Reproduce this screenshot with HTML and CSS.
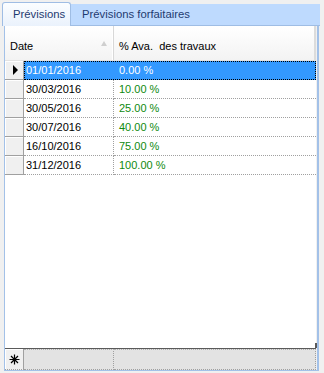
FILE: index.html
```html
<!DOCTYPE html>
<html lang="fr">
<head>
    <meta charset="UTF-8">
    <title>Prévisions</title>
    <link rel="stylesheet" href="styles.css">
</head>
<body>
    <div class="tabs">
        <div class="tab active">Prévisions</div>
        <div class="tab rest">Prévisions forfaitaires</div>
    </div>

    <div class="panel">
        <div class="grid">
            <div class="head">
                <div class="hc c1">Date<span class="sort"></span></div>
                <div class="hc c2">% Ava.&nbsp; des travaux</div>
            </div>

            <div class="row selected">
                <div class="rh"><span class="arrow"></span></div>
                <div class="cells">
                    <div class="c c1">01/01/2016</div>
                    <div class="c c2">0.00 %</div>
                </div>
            </div>
            <div class="row">
                <div class="rh"></div>
                <div class="cells">
                    <div class="c c1">30/03/2016</div>
                    <div class="c c2 pct">10.00 %</div>
                </div>
            </div>
            <div class="row">
                <div class="rh"></div>
                <div class="cells">
                    <div class="c c1">30/05/2016</div>
                    <div class="c c2 pct">25.00 %</div>
                </div>
            </div>
            <div class="row">
                <div class="rh"></div>
                <div class="cells">
                    <div class="c c1">30/07/2016</div>
                    <div class="c c2 pct">40.00 %</div>
                </div>
            </div>
            <div class="row">
                <div class="rh"></div>
                <div class="cells">
                    <div class="c c1">16/10/2016</div>
                    <div class="c c2 pct">75.00 %</div>
                </div>
            </div>
            <div class="row">
                <div class="rh"></div>
                <div class="cells">
                    <div class="c c1">31/12/2016</div>
                    <div class="c c2 pct">100.00 %</div>
                </div>
            </div>

            <div class="filler"></div>

            <div class="row newrow">
                <div class="rh">
                    <svg width="11" height="11" viewBox="0 0 11 11">
                        <path d="M5.5 0.5v10M0.5 5.5h10M2 2l7 7M9 2l-7 7" stroke="#000" stroke-width="1.2" fill="none"/>
                    </svg>
                </div>
                <div class="cells">
                    <div class="c c1"></div>
                    <div class="c c2"></div>
                </div>
            </div>
        </div>
    </div>
</body>
</html>
```

FILE: styles.css
```css
body {
    margin: 0;
    background-color: #f0f0f0;
    font-family: "Liberation Sans", Arial, sans-serif;
    font-size: 11px;
    color: #000;
}

.tabs {
    display: flex;
    align-items: flex-end;
    height: 24px;
    padding: 2px 4px 0 2px;
}
.tab {
    height: 22px;
    line-height: 20px;
    font-size: 11.3px;
    color: #1e3a70;
    box-sizing: border-box;
}
.tab.active {
    width: 69px;
    height: 24px;
    padding-left: 10px;
    line-height: 22px;
    background: linear-gradient(#fbfdff, #eaf2fc);
    border: 1px solid #9fbde4;
    border-bottom: none;
    border-radius: 3px 3px 0 0;
}
.tab.rest {
    flex: 1;
    padding-left: 11px;
    background-color: #bedafe;
    border-bottom: 1px solid #9fbde4;
}

.panel {
    width: 315px;
    height: 345px;
    margin-left: 4px;
    box-sizing: border-box;
    border: 1px solid #a3c1e8;
    border-top: none;
    border-right-width: 2px;
}
.grid {
    display: flex;
    flex-direction: column;
    height: 100%;
    margin-right: 1px;
    background-color: #fff;
}

.head {
    display: flex;
    height: 35px;
    box-sizing: border-box;
    border-bottom: 1px solid #e2e2e2;
    background: linear-gradient(#ffffff, #f3f3f3);
}
.hc {
    position: relative;
    line-height: 34px;
    padding-top: 3px;
    padding-left: 5px;
    box-sizing: border-box;
    white-space: nowrap;
}
.head .c1 {
    width: 109px;
    flex: none;
    border-right: 1px solid #d8d8d8;
    box-shadow: inset -1px 0 0 #fff;
}
.head .c2 {
    flex: 1;
    border-right: 2px solid #dcdcdc;
}
.sort {
    position: absolute;
    right: 6px;
    top: 15px;
    width: 0;
    height: 0;
    border-left: 3px solid transparent;
    border-right: 3px solid transparent;
    border-bottom: 5px solid #cfcfcf;
}

.row {
    display: flex;
    height: 19px;
}
.rh {
    width: 19px;
    flex: none;
    box-sizing: border-box;
    background-color: #f0f0f0;
    border-right: 1px solid #a0a0a0;
    border-bottom: 1px solid #a0a0a0;
    box-shadow: inset 1px 1px 0 #fff;
    display: flex;
    align-items: center;
    justify-content: center;
}
.cells {
    display: flex;
    flex: 1;
}
.c {
    line-height: 18px;
    padding-left: 2px;
    box-sizing: border-box;
    border-bottom: 1px dotted #a0a0a0;
    white-space: nowrap;
}
.c1 {
    width: 90px;
    flex: none;
    border-right: 1px dotted #a0a0a0;
}
.c2 {
    flex: 1;
    padding-left: 5px;
}
.pct {
    color: #0f8a0f;
}

.selected .cells {
    background-color: #3399ff;
    color: #fff;
    outline: 1px dotted #000;
    outline-offset: -1px;
}
.selected .c {
    border-bottom-color: transparent;
    border-right-color: transparent;
}
.arrow {
    width: 0;
    height: 0;
    margin-left: 2px;
    border-top: 5px solid transparent;
    border-bottom: 5px solid transparent;
    border-left: 5px solid #000;
}

.filler {
    flex: 1;
}

.newrow {
    position: relative;
    height: 21px;
    border-top: 1px solid #5a5a5a;
    background-color: #e3e3e3;
}
.newrow::after {
    content: "";
    position: absolute;
    right: -1px;
    top: -6px;
    width: 2px;
    height: 5px;
    background-color: #5a5a5a;
}
.newrow .rh {
    background-color: #f0f0f0;
    border-bottom: 1px dotted #a0a0a0;
}
.newrow .c {
    border-bottom: 1px dotted #a0a0a0;
    border-top: 1px dotted #b0b0b0;
}
.newrow .c2 {
    border-right: 1px dotted #a0a0a0;
}
```
